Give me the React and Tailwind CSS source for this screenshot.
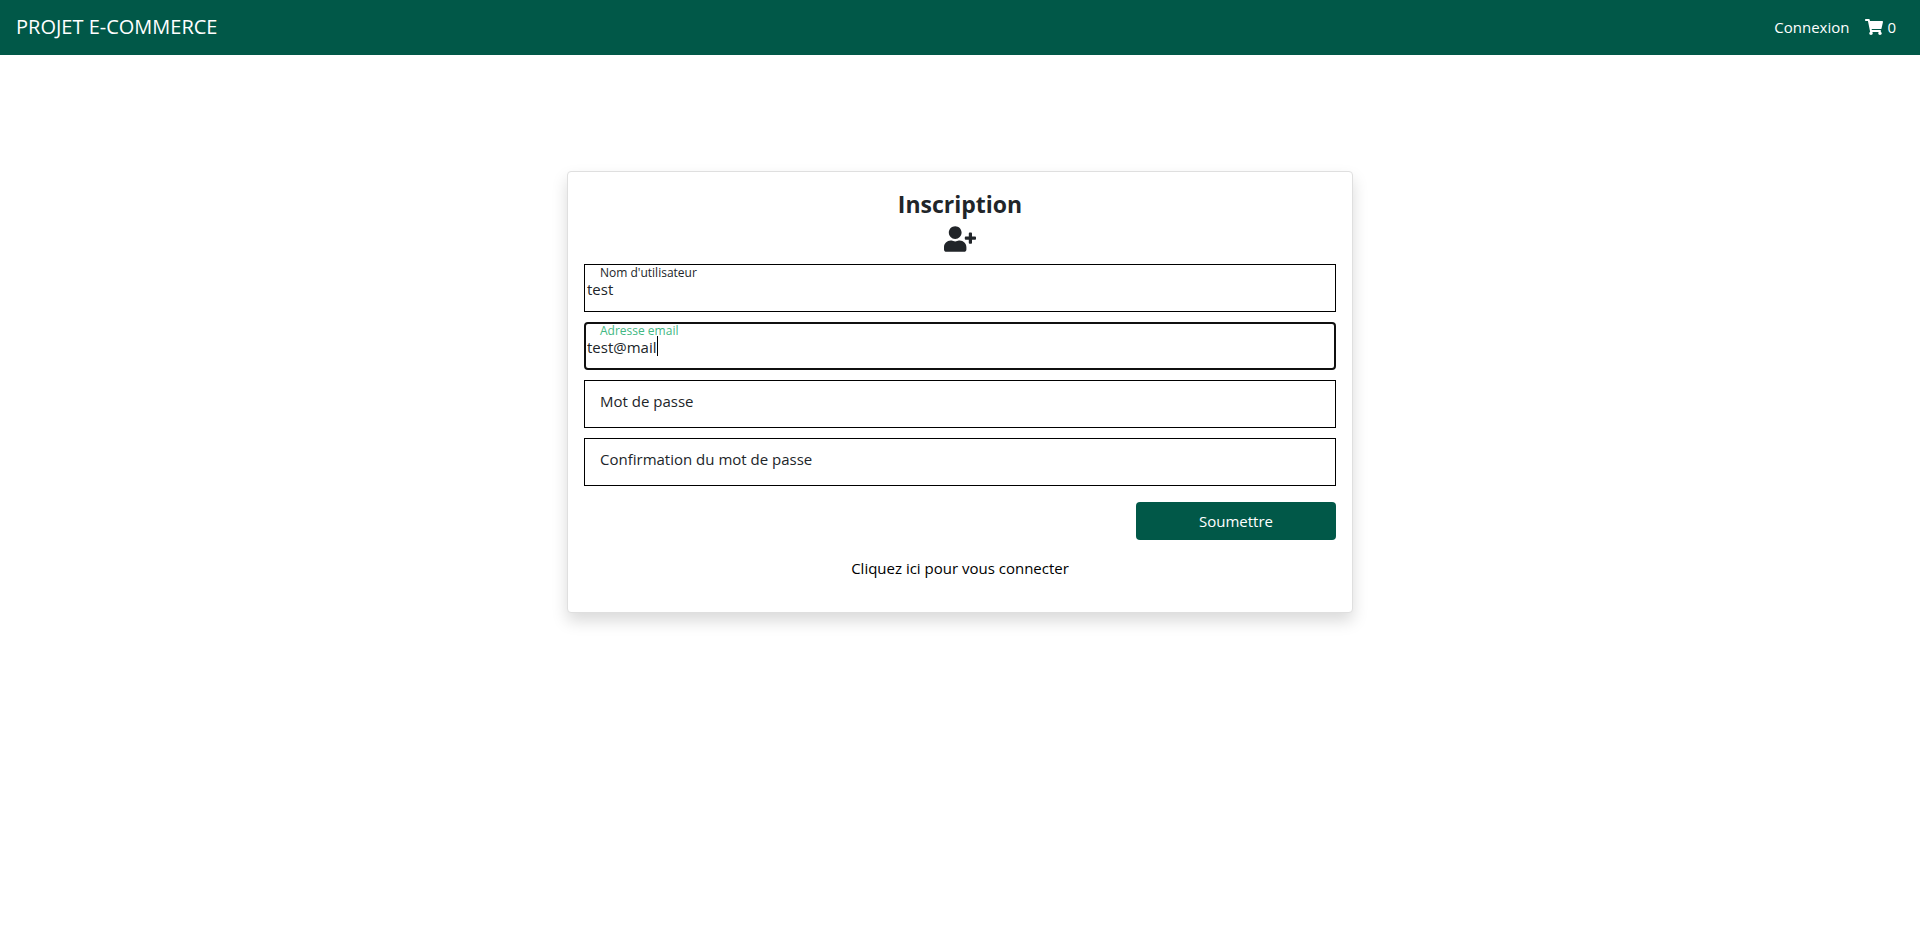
import { useState } from "react";
import { FaShoppingCart, FaUserPlus } from "react-icons/fa";

const fields = [
  { id: "username", label: "Nom d'utilisateur", type: "text", value: "test" },
  { id: "email", label: "Adresse email", type: "text", value: "test@mail", active: true },
  { id: "password", label: "Mot de passe", type: "password", value: "" },
  { id: "confirmation", label: "Confirmation du mot de passe", type: "password", value: "" },
];

function Field({ id, label, type, value: initial, active }) {
  const [value, setValue] = useState(initial);
  const floated = active || value !== "";
  return (
    <div className="relative">
      <input
        id={id}
        type={type}
        value={value}
        onChange={(e) => setValue(e.target.value)}
        className={
          active
            ? "block h-12 w-full rounded-[4px] border-2 border-[#101010] bg-white pt-0.5 pr-0.5 pl-px text-[15px] text-[#212529] outline-none"
            : "block h-12 w-full border border-black bg-white px-0.5 pt-0.5 text-[15px] text-[#212529] outline-none"
        }
      />
      <label
        htmlFor={id}
        className={
          floated
            ? active
              ? "pointer-events-none absolute top-0 left-4 text-[12px] leading-[18px] text-[#42b883]"
              : "pointer-events-none absolute top-0 left-4 text-[12px] leading-[18px] text-[#212529]"
            : "pointer-events-none absolute top-2 left-4 text-[15px] leading-[26px] text-[#212529]"
        }
      >
        {label}
      </label>
      {active && <span aria-hidden="true" className="absolute top-3.5 left-[73px] h-5 w-px bg-black" />}
    </div>
  );
}

export default function App() {
  return (
    <div className="min-h-screen bg-white font-['Open_Sans',sans-serif] text-[15px] leading-6 text-[#212529]">
      <header className="flex h-[55px] items-center justify-between bg-[#015848] pr-6 pb-0.5 pl-4 text-white">
        <a href="#accueil" className="text-[20px]">PROJET E-COMMERCE</a>
        <nav className="flex items-center gap-4">
          <a href="#connexion">Connexion</a>
          <a href="#panier" aria-label="Panier" className="flex items-center gap-1">
            <FaShoppingCart className="h-4 w-[18px]" />
            <span>0</span>
          </a>
        </nav>
      </header>

      <main className="mx-auto mt-[116px] w-full max-w-[786px] rounded border border-[#dfdfdf] bg-white p-4 shadow-[0_8px_16px_rgba(0,0,0,0.15)]">
        <h1 className="text-center text-[23px] leading-8 font-bold">Inscription</h1>
        <div className="mt-1.5 flex justify-center">
          <FaUserPlus className="h-[26px] w-8" />
        </div>
        <form className="mt-3 flex flex-col gap-2.5" onSubmit={(e) => e.preventDefault()}>
          {fields.map((field) => (
            <Field key={field.id} {...field} />
          ))}
          <button type="submit" className="mt-1.5 h-[38px] w-[200px] self-end rounded bg-[#015848] text-white">
            Soumettre
          </button>
        </form>
        <p className="mt-4 mb-4 text-center">
          <a href="#connexion" className="text-black">Cliquez ici pour vous connecter</a>
        </p>
      </main>
    </div>
  );
}
